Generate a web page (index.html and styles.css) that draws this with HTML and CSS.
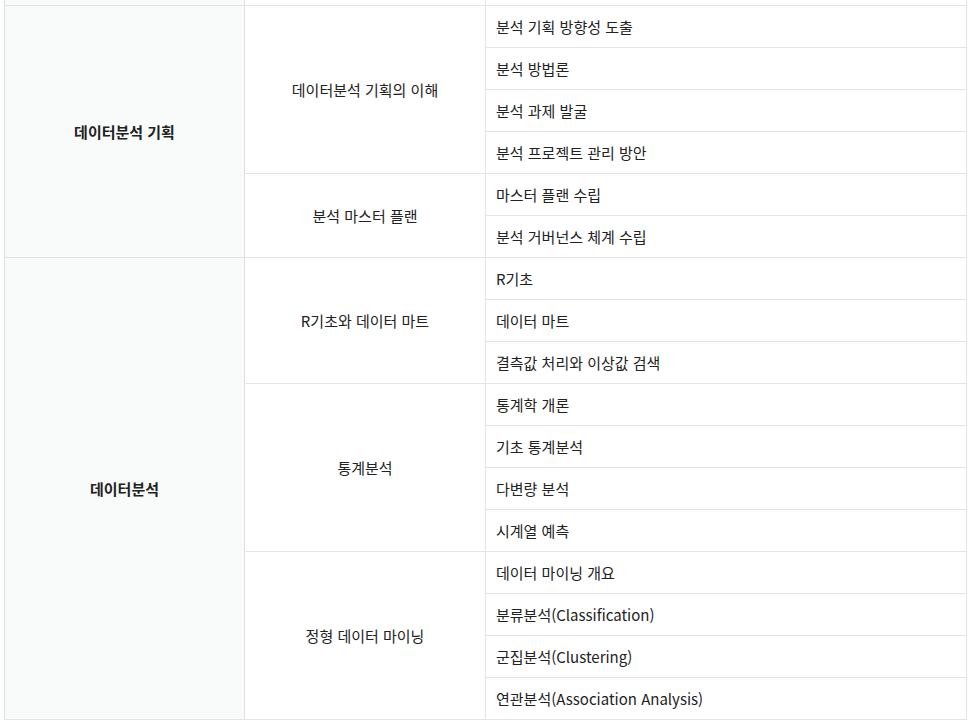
FILE: index.html
```html
<!DOCTYPE html>
<html lang="ko">
<head>
<meta charset="utf-8">
<link rel="stylesheet" href="styles.css">
</head>
<body>
<div class="wrap">
<table class="curri">
  <colgroup><col class="c1"><col class="c2"><col class="c3"></colgroup>
  <tbody>
    <tr class="prev"><th></th><td class="mid"></td><td class="item"></td></tr>
    <tr><th rowspan="6">데이터분석 기획</th><td class="mid" rowspan="4">데이터분석 기획의 이해</td><td class="item">분석 기획 방향성 도출</td></tr>
    <tr><td class="item">분석 방법론</td></tr>
    <tr><td class="item">분석 과제 발굴</td></tr>
    <tr><td class="item">분석 프로젝트 관리 방안</td></tr>
    <tr><td class="mid" rowspan="2">분석 마스터 플랜</td><td class="item">마스터 플랜 수립</td></tr>
    <tr><td class="item">분석 거버넌스 체계 수립</td></tr>
    <tr><th rowspan="11">데이터분석</th><td class="mid" rowspan="3">R기초와 데이터 마트</td><td class="item">R기초</td></tr>
    <tr><td class="item">데이터 마트</td></tr>
    <tr><td class="item">결측값 처리와 이상값 검색</td></tr>
    <tr><td class="mid" rowspan="4">통계분석</td><td class="item">통계학 개론</td></tr>
    <tr><td class="item">기초 통계분석</td></tr>
    <tr><td class="item">다변량 분석</td></tr>
    <tr><td class="item">시계열 예측</td></tr>
    <tr><td class="mid" rowspan="4">정형 데이터 마이닝</td><td class="item">데이터 마이닝 개요</td></tr>
    <tr><td class="item">분류분석(Classification)</td></tr>
    <tr><td class="item">군집분석(Clustering)</td></tr>
    <tr><td class="item">연관분석(Association Analysis)</td></tr>
  </tbody>
</table>
</div>
</body>
</html>
```

FILE: styles.css
```css
html, body {
  margin: 0;
  padding: 0;
  background: #ffffff;
}
.wrap {
  padding-left: 4px;
  width: 963px;
}
.curri {
  border-collapse: collapse;
  width: 963px;
  table-layout: fixed;
  margin-top: -37px;
  font-family: "Noto Sans CJK KR", "Noto Sans", sans-serif;
  font-size: 15px;
  color: #222;
  border-left: 1px solid #dcdfe6;
  border-right: 1px solid #dcdfe6;
  border-bottom: 1px solid #dcdfe6;
}
.c1 { width: 240px; }
.c2 { width: 241px; }
.c3 { width: auto; }
.curri tr { height: 42px; }
.curri th,
.curri td {
  border: 1px solid #e4e4e4;
  padding: 0 10px;
  height: 41px;
  box-sizing: border-box;
  line-height: 20px;
}
.curri th {
  background: #f9fbfa;
  font-weight: 700;
  text-align: center;
  border-right-color: #dcdfe6;
  border-left-color: #dcdfe6;
}
.curri td.mid {
  text-align: center;
  font-weight: 400;
}
.curri td.item {
  text-align: left;
}
```
